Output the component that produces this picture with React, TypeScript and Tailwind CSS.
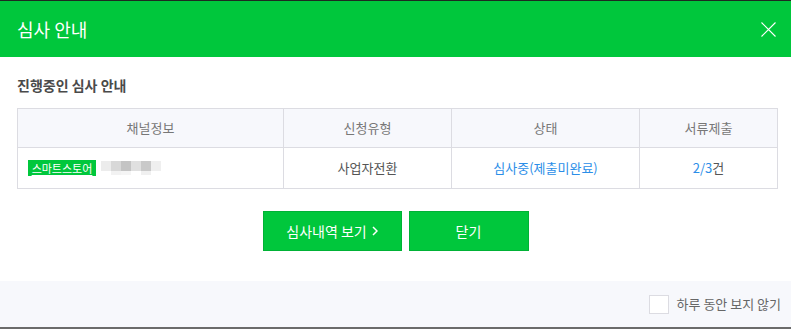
import React from 'react'

const font = { fontFamily: '"Noto Sans CJK KR", "Noto Sans", sans-serif' }

export default function App() {
  return (
    <div className="w-[791px] h-[329px] bg-white flex flex-col overflow-hidden" style={font}>
      {/* header */}
      <div className="h-[57px] bg-[#00c73c] border-t border-[#1e2a22] flex items-center justify-between pl-[17px] pr-[15px] shrink-0">
        <h1 className="text-[18px] text-white leading-none">심사 안내</h1>
        <button className="w-[15px] h-[15px]">
          <svg width="15" height="15" viewBox="0 0 15 15">
            <path d="M0.5 0.5L14.5 14.5M14.5 0.5L0.5 14.5" stroke="white" strokeWidth="1.1" />
          </svg>
        </button>
      </div>

      {/* body */}
      <div className="px-[17px] pt-[19px] h-[224px] shrink-0">
        <h2 className="text-[14px] font-bold text-[#4a4a4a] leading-[18px]">진행중인 심사 안내</h2>

        <table className="mt-[14px] w-[760px] border-collapse table-fixed text-[13px]">
          <colgroup>
            <col className="w-[266px]" />
            <col className="w-[168px]" />
            <col className="w-[188px]" />
            <col className="w-[138px]" />
          </colgroup>
          <thead>
            <tr className="h-[39px] bg-[#f7f8fc] text-[#777]">
              <th className="border border-[#dcdce2] font-normal">채널정보</th>
              <th className="border border-[#dcdce2] font-normal">신청유형</th>
              <th className="border border-[#dcdce2] font-normal">상태</th>
              <th className="border border-[#dcdce2] font-normal">서류제출</th>
            </tr>
          </thead>
          <tbody>
            <tr className="h-[41px] text-[#555]">
              <td className="border border-[#dcdce2] pl-[10px]">
                <div className="flex items-center gap-[5px]">
                  <span className="h-[16px] w-[68px] bg-[#00c73c] text-white text-[11px] leading-[16px] text-center underline underline-offset-2">
                    스마트스토어
                  </span>
                  <div className="flex flex-col">
                    <div className="flex">
                      <span className="w-[10px] h-[10px] bg-[#ececec]" />
                      <span className="w-[10px] h-[10px] bg-[#d8d8d8]" />
                      <span className="w-[10px] h-[10px] bg-[#c4c4c4]" />
                      <span className="w-[10px] h-[10px] bg-[#e0e0e0]" />
                      <span className="w-[10px] h-[10px] bg-[#c9c9c9]" />
                      <span className="w-[10px] h-[10px] bg-[#efefef]" />
                    </div>
                    <div className="flex">
                      <span className="w-[10px] h-[4px] bg-white" />
                      <span className="w-[10px] h-[4px] bg-[#f2f2f2]" />
                      <span className="w-[10px] h-[4px] bg-[#f5f5f5]" />
                      <span className="w-[10px] h-[4px] bg-white" />
                      <span className="w-[10px] h-[4px] bg-[#f0f0f0]" />
                    </div>
                  </div>
                </div>
              </td>
              <td className="border border-[#dcdce2] text-center">사업자전환</td>
              <td className="border border-[#dcdce2] text-center text-[#2b8ee8]">심사중(제출미완료)</td>
              <td className="border border-[#dcdce2] text-center">
                <span className="text-[#2b8ee8]">2/3</span>건
              </td>
            </tr>
          </tbody>
        </table>

        <div className="mt-[22px] flex justify-center gap-[7px]">
          <button className="w-[139px] h-[40px] bg-[#00c73c] border border-[#00b236] text-white text-[14px] flex items-center justify-center gap-[5px]">
            심사내역 보기
            <svg width="6" height="10" viewBox="0 0 6 10">
              <path d="M1 1L5 5L1 9" stroke="white" strokeWidth="1.5" fill="none" />
            </svg>
          </button>
          <button className="w-[120px] h-[40px] bg-[#00c73c] border border-[#00b236] text-white text-[14px]">
            닫기
          </button>
        </div>
      </div>

      {/* footer */}
      <div className="h-[46px] bg-[#f7f8fc] flex items-center justify-end pr-[10px] gap-[8px] shrink-0">
        <span className="w-[20px] h-[19px] bg-white border border-[#dcdce2]" />
        <span className="text-[13px] text-[#666]">하루 동안 보지 않기</span>
      </div>
      <div className="h-[2px] bg-[#6b6b6b] shrink-0" />
    </div>
  )
}
